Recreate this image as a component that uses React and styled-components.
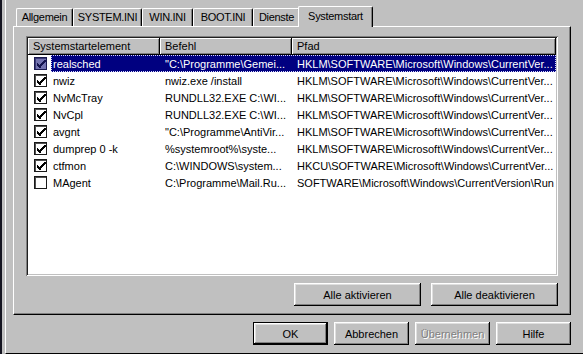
import React from 'react'
import styled, { createGlobalStyle } from 'styled-components'

const GlobalStyle = createGlobalStyle`
  html, body {
    margin: 0;
    padding: 0;
    background: #ffffff;
  }
  * {
    box-sizing: border-box;
  }
`

const rows = [
  { name: 'realsched', cmd: '"C:\\Programme\\Gemei...', path: 'HKLM\\SOFTWARE\\Microsoft\\Windows\\CurrentVer...', on: true, selected: true },
  { name: 'nwiz', cmd: 'nwiz.exe /install', path: 'HKLM\\SOFTWARE\\Microsoft\\Windows\\CurrentVer...', on: true },
  { name: 'NvMcTray', cmd: 'RUNDLL32.EXE C:\\WI...', path: 'HKLM\\SOFTWARE\\Microsoft\\Windows\\CurrentVer...', on: true },
  { name: 'NvCpl', cmd: 'RUNDLL32.EXE C:\\WI...', path: 'HKLM\\SOFTWARE\\Microsoft\\Windows\\CurrentVer...', on: true },
  { name: 'avgnt', cmd: '"C:\\Programme\\AntiVir...', path: 'HKLM\\SOFTWARE\\Microsoft\\Windows\\CurrentVer...', on: true },
  { name: 'dumprep 0 -k', cmd: '%systemroot%\\syste...', path: 'HKLM\\SOFTWARE\\Microsoft\\Windows\\CurrentVer...', on: true },
  { name: 'ctfmon', cmd: 'C:\\WINDOWS\\system...', path: 'HKCU\\SOFTWARE\\Microsoft\\Windows\\CurrentVer...', on: true },
  { name: 'MAgent', cmd: 'C:\\Programme\\Mail.Ru...', path: 'SOFTWARE\\Microsoft\\Windows\\CurrentVersion\\Run', on: false },
]

const tabs = [
  { label: 'Allgemein', width: 57 },
  { label: 'SYSTEM.INI', width: 69 },
  { label: 'WIN.INI', width: 51 },
  { label: 'BOOT.INI', width: 60 },
  { label: 'Dienste', width: 47 },
  { label: 'Systemstart', width: 75, active: true },
]

function Check({ on, selected }) {
  return (
    <CheckBox $selected={selected}>
      {on && (
        <svg width="9" height="9" viewBox="0 0 9 9" shapeRendering="crispEdges">
          <path
            d="M0 3h1v3H0z M1 4h1v3H1z M2 5h1v3H2z M3 4h1v4H3z M4 3h1v3H4z M5 2h1v3H5z M6 1h1v3H6z M7 0h1v3H7z M8 0h1v2H8z"
            fill={selected ? '#14144e' : '#000'}
          />
        </svg>
      )}
    </CheckBox>
  )
}

function App() {
  return (
    <Page>
      <GlobalStyle />
      <Frame>
        <Dialog>
          <TabStrip>
            {tabs.map((t) => (
              <Tab key={t.label} $active={t.active} $width={t.width}>{t.label}</Tab>
            ))}
          </TabStrip>
          <Panel>
            <ListView>
              <Header>
                <HeaderCell>Systemstartelement</HeaderCell>
                <HeaderCell>Befehl</HeaderCell>
                <HeaderCell>Pfad</HeaderCell>
              </Header>
              {rows.map((r) => (
                <Row key={r.name}>
                  <CheckCell>
                    <Check on={r.on} selected={r.selected} />
                  </CheckCell>
                  <RowBody $selected={r.selected}>
                    <NameCell>{r.name}</NameCell>
                    <TextCell>{r.cmd}</TextCell>
                    <TextCell>{r.path}</TextCell>
                  </RowBody>
                </Row>
              ))}
            </ListView>
            <PanelButtons>
              <Button $wide>Alle aktivieren</Button>
              <Button $wide>Alle deaktivieren</Button>
            </PanelButtons>
          </Panel>
          <DialogButtons>
            <Button $default>OK</Button>
            <Button>Abbrechen</Button>
            <Button disabled>Übernehmen</Button>
            <Button>Hilfe</Button>
          </DialogButtons>
        </Dialog>
      </Frame>
    </Page>
  )
}

export default App

const Page = styled.div`
  width: 583px;
  height: 363px;
  overflow: hidden;
  background: #ffffff;
  font-family: "Liberation Sans", Arial, sans-serif;
  font-size: 11px;
  color: #000;
`

const Frame = styled.div`
  height: 354px;
  background: #c0c0c0;
  border-left: 2px solid #141420;
  padding-left: 3px;
`

const Dialog = styled.div`
  height: 100%;
  border-left: 1px solid #ffffff;
  border-bottom: 1px solid #000000;
  padding-left: 7px;
  display: flex;
  flex-direction: column;
`

const TabStrip = styled.div`
  height: 26px;
  display: flex;
  align-items: flex-end;
  padding-left: 3px;
  position: relative;
  z-index: 1;
`

const Tab = styled.div`
  width: ${(p) => p.$width}px;
  height: ${(p) => (p.$active ? '21px' : '18px')};
  margin: ${(p) => (p.$active ? '0 -2px -1px -2px' : '0')};
  padding-top: ${(p) => (p.$active ? '2px' : '1px')};
  text-align: center;
  letter-spacing: -0.3px;
  background: #c0c0c0;
  border-top: 1px solid #ffffff;
  border-left: 1px solid #ffffff;
  border-right: 1px solid #000000;
  border-top-left-radius: 2px;
  border-top-right-radius: 2px;
  box-shadow: inset -1px 0 #808080;
  line-height: 14px;
  white-space: nowrap;
  position: relative;
  z-index: ${(p) => (p.$active ? 2 : 1)};
`

const Panel = styled.div`
  width: 558px;
  height: 289px;
  border-top: 1px solid #ffffff;
  border-left: 1px solid #ffffff;
  border-right: 1px solid #000000;
  border-bottom: 1px solid #000000;
  box-shadow: inset -1px -1px #808080;
  padding: 9px 12px 8px 12px;
  display: flex;
  flex-direction: column;
`

const ListView = styled.div`
  width: 532px;
  height: 240px;
  background: #ffffff;
  padding: 2px;
  box-shadow: inset 1px 1px #808080, inset -1px -1px #ffffff,
    inset 2px 2px #202020, inset -2px -2px #c0c0c0;
`

const Header = styled.div`
  display: grid;
  grid-template-columns: 132px 132px 1fr;
  height: 17px;
`

const HeaderCell = styled.div`
  background: #c0c0c0;
  padding-left: 5px;
  line-height: 16px;
  box-shadow: inset -1px -1px #000000, inset 1px 1px #ffffff,
    inset -2px -2px #808080;
  white-space: nowrap;
  overflow: hidden;
`

const Row = styled.div`
  display: flex;
  height: 17px;
`

const CheckCell = styled.div`
  width: 23px;
  display: flex;
  align-items: center;
  padding-left: 6px;
`

const CheckBox = styled.div`
  width: 13px;
  height: 13px;
  background: ${(p) => (p.$selected ? '#7474b0' : '#ffffff')};
  border: 1px solid ${(p) => (p.$selected ? '#1a1a50' : '#1a1a1a')};
  box-shadow: inset 1px 1px ${(p) => (p.$selected ? '#3a3a78' : '#505050')};
  display: flex;
  align-items: center;
  justify-content: center;
  padding: 1px 0 0 1px;
`

const RowBody = styled.div`
  flex: 1;
  display: grid;
  grid-template-columns: 109px 132px 1fr;
  align-items: center;
  background: ${(p) => (p.$selected ? '#000080' : 'transparent')};
  color: ${(p) => (p.$selected ? '#ffffff' : '#000000')};
  outline: ${(p) => (p.$selected ? '1px dotted #d8d8ff' : 'none')};
  outline-offset: -1px;
`

const NameCell = styled.div`
  padding-left: 2px;
  white-space: nowrap;
  overflow: hidden;
`

const TextCell = styled.div`
  padding-left: 5px;
  white-space: nowrap;
  overflow: hidden;
`

const PanelButtons = styled.div`
  display: flex;
  justify-content: flex-end;
  gap: 10px;
  margin-top: 7px;
`

const DialogButtons = styled.div`
  width: 558px;
  display: flex;
  justify-content: flex-end;
  gap: 6px;
  margin-top: 7px;
`

const Button = styled.button`
  width: ${(p) => (p.$wide ? '127px' : '75px')};
  height: 23px;
  padding: 0;
  background: #c0c0c0;
  font-family: inherit;
  font-size: 11px;
  color: #000;
  border: ${(p) => (p.$default ? '1px solid #000000' : 'none')};
  box-shadow: inset -1px -1px #000000, inset 1px 1px #ffffff,
    inset -2px -2px #808080, inset 2px 2px #dfdfdf;

  &:disabled {
    color: #808080;
    text-shadow: 1px 1px #ffffff;
  }
`
